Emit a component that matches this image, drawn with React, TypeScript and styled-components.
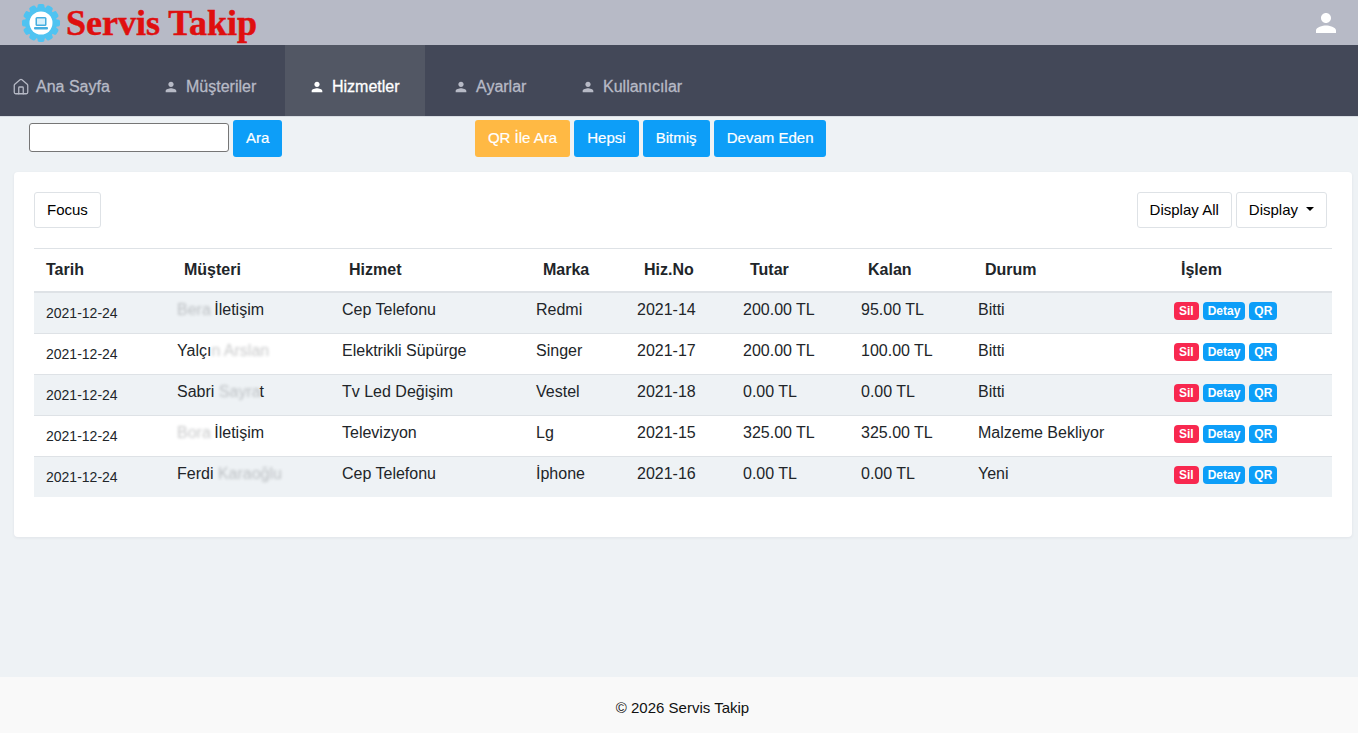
import * as React from 'react';
import styled, { createGlobalStyle } from 'styled-components';
import { MdPerson } from 'react-icons/md';
import { Home } from 'lucide-react';

const GlobalStyle = createGlobalStyle`
	html, body {
		margin: 0;
		padding: 0;
		background: #eef2f5;
		font-family: 'Liberation Sans', Arial, sans-serif;
		color: #212529;
	}
	* {
		box-sizing: border-box;
	}
`;

const Page = styled.div`
	display: flex;
	flex-direction: column;
	height: 733px;
	overflow: hidden;
`;
const TopBar = styled.header`
	height: 45px;
	flex: none;
	background: #b7bac6;
	display: flex;
	align-items: center;
	justify-content: space-between;
	padding: 0 17px 0 21px;
`;
const Logo = styled.div`
	display: flex;
	align-items: center;
	gap: 5px;
`;
const LogoText = styled.span`
	font-family: 'Liberation Serif', 'Times New Roman', serif;
	font-weight: 700;
	font-size: 36px;
	line-height: 40px;
	color: #df0f0f;
	-webkit-text-stroke: 0.5px #df0f0f;
	white-space: nowrap;
`;
const Nav = styled.nav`
	height: 72px;
	flex: none;
	background: #434858;
	display: flex;
	border-bottom: 1px solid #d8dde3;
`;
const NavItem = styled.a<{ $active?: boolean; $left: number; $width: number }>`
	display: flex;
	align-items: center;
	flex: none;
	gap: 7px;
	width: ${(p) => p.$width}px;
	height: 71px;
	padding: 13px 0 0 ${(p) => p.$left}px;
	font-size: 16px;
	color: ${(p) => (p.$active ? '#ffffff' : '#b7bac6')};
	background: ${(p) => (p.$active ? '#525764' : 'transparent')};
	-webkit-text-stroke: 0.3px currentColor;
	& svg {
		flex: none;
	}
`;
const HomeIcon = styled(Home)`
	margin-right: -1px;
	-webkit-text-stroke: 0;
`;
const SearchRow = styled.div`
	display: flex;
	align-items: center;
	height: 40px;
	padding: 3px 0 0 29px;
	flex: none;
`;
const SearchInput = styled.input`
	width: 200px;
	height: 29px;
	margin: 0 4px 2px 0;
	background: #fff;
	border: 1px solid #767676;
	border-radius: 3px;
`;
const FilterGroup = styled.div`
	display: flex;
	gap: 4.15px;
	margin-left: 192.6px;
`;
const ActionButton = styled.button<{ $kind?: 'blue' | 'orange' }>`
	height: 37px;
	padding: 0 13px 2px;
	border: none;
	border-radius: 3px;
	font-family: inherit;
	font-size: 15px;
	color: #fff;
	background: ${(p) => (p.$kind === 'orange' ? '#ffb944' : '#0d9ef8')};
	-webkit-text-stroke: 0.2px currentColor;
`;
const Card = styled.section`
	margin: 15px 6px 0 14px;
	height: 365px;
	background: #fff;
	border-radius: 4px;
	padding: 20px 20px 0 20px;
	box-shadow: 0 1px 3px rgba(60, 70, 90, 0.08);
`;
const Toolbar = styled.div`
	display: flex;
	justify-content: space-between;
	padding-right: 5px;
	height: 56px;
`;
const ToolGroup = styled.div`
	display: flex;
	gap: 4px;
`;
const ToolButton = styled.button`
	height: 36px;
	padding: 0 12px 2px;
	background: #fff;
	border: 1px solid #dee2e6;
	border-radius: 3px;
	font-family: inherit;
	font-size: 15px;
	color: #000;
	display: flex;
	align-items: center;
`;
const Caret = styled.span`
	margin-left: 8px;
	margin-top: -1px;
	border-top: 4.5px solid #000;
	border-left: 4.5px solid transparent;
	border-right: 4.5px solid transparent;
`;
const Table = styled.table`
	width: 1298px;
	table-layout: fixed;
	border-collapse: separate;
	border-spacing: 0;
	border-top: 1px solid #dee2e6;
`;
const HeadCell = styled.th`
	height: 44px;
	padding: 0 12px;
	text-align: left;
	font-size: 16px;
	font-weight: 700;
	border-bottom: 2px solid #dee2e6;
`;
const Row = styled.tr<{ $odd: boolean }>`
	background: ${(p) => (p.$odd ? '#eef2f5' : '#fff')};
	& > td {
		height: 41px;
		border-bottom: 1px solid #dee2e6;
	}
	&:last-child > td {
		height: 40px;
		border-bottom: none;
	}
`;
const Cell = styled.td`
	padding: 7px 5px 0;
	vertical-align: top;
	font-size: 16px;
	line-height: 20px;
	color: #212529;
	white-space: nowrap;
`;
const DateCell = styled(Cell)`
	padding: 10px 12px 0;
	font-size: 14px;
`;
const ActionCell = styled(Cell)`
	padding-top: 9px;
`;
const Badges = styled.div`
	display: flex;
	gap: 4px;
`;
const Badge = styled.span<{ $red?: boolean }>`
	height: 18px;
	padding: 0 5px;
	border-radius: 4px;
	font-size: 12px;
	font-weight: 700;
	line-height: 18px;
	color: #fff;
	background: ${(p) => (p.$red ? '#f8284f' : '#0d9ef8')};
`;
const Smudge = styled.span`
	display: inline-block;
	margin-right: -1px;
	white-space: pre;
	filter: blur(1.4px);
	opacity: 0.25;
`;
const Footer = styled.footer`
	margin-top: auto;
	height: 56px;
	flex: none;
	background: #f9f9f9;
	display: flex;
	align-items: center;
	justify-content: center;
	padding: 4px 0 0 7px;
	font-size: 15px;
	color: #111;
`;

const GearLogo = () => (
	<svg width="40" height="40" viewBox="0 0 40 40">
		<g fill="#4fc3f1">
			{[0, 30, 60, 90, 120, 150].map((a) => (
				<rect key={a} x="16.5" y="1" width="7" height="38" rx="2" transform={`rotate(${a} 20 20)`} />
			))}
			<circle cx="20" cy="20" r="16" />
		</g>
		<circle cx="20" cy="20" r="11.5" fill="#fff" />
		<rect x="14.5" y="14" width="11" height="9" rx="1.5" fill="#45aee0" />
		<rect x="16" y="15.5" width="8" height="6" fill="#d8f0fb" />
		<rect x="13" y="24" width="14" height="2.5" rx="1" fill="#45aee0" />
	</svg>
);

const navItems = [
	{ label: 'Ana Sayfa', left: 12, width: 139, home: true },
	{ label: 'Müşteriler', left: 24, width: 146 },
	{ label: 'Hizmetler', left: 24, width: 140, active: true },
	{ label: 'Ayarlar', left: 28, width: 127 },
	{ label: 'Kullanıcılar', left: 28, width: 140 },
];

const columns: [string, number][] = [
	['Tarih', 138],
	['Müşteri', 165],
	['Hizmet', 194],
	['Marka', 101],
	['Hiz.No', 106],
	['Tutar', 118],
	['Kalan', 117],
	['Durum', 196],
	['İşlem', 163],
];

const rows = [
	{ before: '', blur: 'Bera ', after: 'İletişim', service: 'Cep Telefonu', brand: 'Redmi', no: '2021-14', total: '200.00 TL', rest: '95.00 TL', status: 'Bitti' },
	{ before: 'Yalçı', blur: 'n Arslan', after: '', service: 'Elektrikli Süpürge', brand: 'Singer', no: '2021-17', total: '200.00 TL', rest: '100.00 TL', status: 'Bitti' },
	{ before: 'Sabri', blur: ' Sayra', after: 't', service: 'Tv Led Değişim', brand: 'Vestel', no: '2021-18', total: '0.00 TL', rest: '0.00 TL', status: 'Bitti' },
	{ before: '', blur: 'Bora ', after: 'İletişim', service: 'Televizyon', brand: 'Lg', no: '2021-15', total: '325.00 TL', rest: '325.00 TL', status: 'Malzeme Bekliyor' },
	{ before: 'Ferdi', blur: ' Karaoğlu', after: '', service: 'Cep Telefonu', brand: 'İphone', no: '2021-16', total: '0.00 TL', rest: '0.00 TL', status: 'Yeni' },
];

export default function App() {
	return (
		<Page>
			<GlobalStyle />
			<TopBar>
				<Logo>
					<GearLogo />
					<LogoText>Servis Takip</LogoText>
				</Logo>
				<MdPerson size={30} color="#fff" />
			</TopBar>
			<Nav>
				{navItems.map((item) => (
					<NavItem key={item.label} $active={item.active} $left={item.left} $width={item.width}>
						{item.home ? <HomeIcon size={18} strokeWidth={1.7} /> : <MdPerson size={16} />}
						{item.label}
					</NavItem>
				))}
			</Nav>
			<SearchRow>
				<SearchInput />
				<ActionButton>Ara</ActionButton>
				<FilterGroup>
					<ActionButton $kind="orange">QR İle Ara</ActionButton>
					<ActionButton>Hepsi</ActionButton>
					<ActionButton>Bitmiş</ActionButton>
					<ActionButton>Devam Eden</ActionButton>
				</FilterGroup>
			</SearchRow>
			<Card>
				<Toolbar>
					<ToolButton>Focus</ToolButton>
					<ToolGroup>
						<ToolButton>Display All</ToolButton>
						<ToolButton>
							Display
							<Caret />
						</ToolButton>
					</ToolGroup>
				</Toolbar>
				<Table>
					<colgroup>
						{columns.map(([name, width]) => (
							<col key={name} width={width} />
						))}
					</colgroup>
					<thead>
						<tr>
							{columns.map(([name]) => (
								<HeadCell key={name}>{name}</HeadCell>
							))}
						</tr>
					</thead>
					<tbody>
						{rows.map((row, i) => (
							<Row key={row.no} $odd={i % 2 === 0}>
								<DateCell>2021-12-24</DateCell>
								<Cell>
									{row.before}
									<Smudge>{row.blur}</Smudge>
									{row.after}
								</Cell>
								<Cell>{row.service}</Cell>
								<Cell>{row.brand}</Cell>
								<Cell>{row.no}</Cell>
								<Cell>{row.total}</Cell>
								<Cell>{row.rest}</Cell>
								<Cell>{row.status}</Cell>
								<ActionCell>
									<Badges>
										<Badge $red>Sil</Badge>
										<Badge>Detay</Badge>
										<Badge>QR</Badge>
									</Badges>
								</ActionCell>
							</Row>
						))}
					</tbody>
				</Table>
			</Card>
			<Footer>© 2026 Servis Takip</Footer>
		</Page>
	);
}
